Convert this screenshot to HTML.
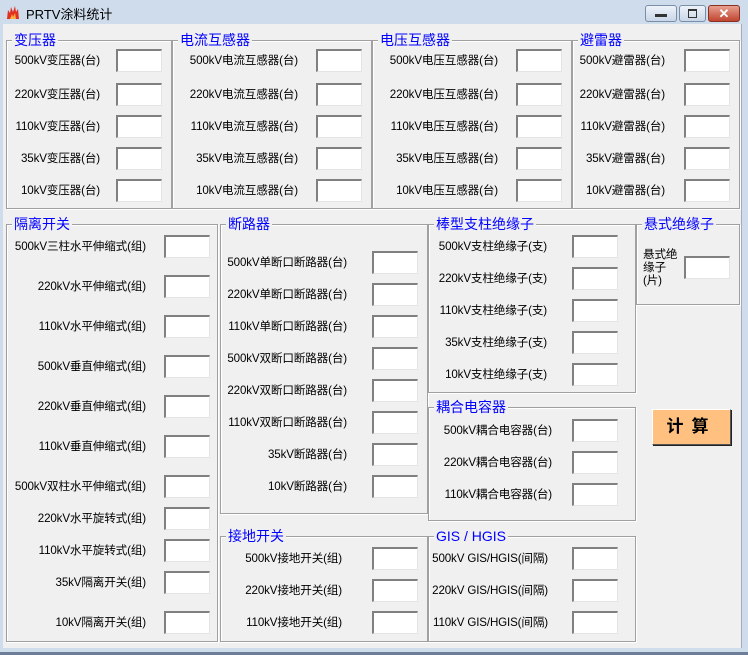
<!DOCTYPE html>
<html><head><meta charset="utf-8"><style>
body{margin:0;width:748px;height:655px;overflow:hidden;background:#6d7f96;font-family:"Liberation Sans","Noto Sans CJK SC","WenQuanYi Zen Hei",sans-serif;}
#win{position:absolute;left:0;top:0;width:748px;height:652px;background:#cfdcec;}
#client{position:absolute;left:3px;top:24px;width:738px;height:624px;background:#f0f0f0;border-right:1px solid #aab;}
.t{position:absolute;left:26px;top:4px;font-size:13px;color:#000}
.gb{position:absolute;border:1px solid #a0a0a0;box-shadow:inset 1px 1px 0 #fff,1px 1px 0 #fff;}
.lg{position:absolute;left:5px;top:-10px;background:#f0f0f0;color:#0000ff;font-size:14px;padding:0 2px;line-height:18px;white-space:nowrap}
.lb{position:absolute;font-size:11.6px;letter-spacing:-0.15px;color:#000;text-align:right;white-space:nowrap;line-height:14px}
.in{position:absolute;width:43px;height:20px;background:#fff;border-top:2px solid #808080;border-left:2px solid #808080;border-right:1px solid #e4e4e4;border-bottom:1px solid #e4e4e4;}
.btn{position:absolute;left:652px;top:409px;width:77px;height:34px;background:#ffc080;border:1px solid #fff;border-right-color:#555;border-bottom-color:#555;box-shadow:1px 1px 0 #222;font-size:17px;font-weight:bold;text-align:center;line-height:34px;letter-spacing:8px}
.wb{position:absolute;top:5px;height:15px;border:1px solid #7a8ea8;border-radius:3px;background:linear-gradient(#eef3fa,#c9d6e8);}
</style></head><body>
<div id="win">
<svg style="position:absolute;left:5px;top:4px" width="16" height="16"><path d="M2 15 L3 6 L5 9 L6 3 L8 8 L10 2 L11 8 L13 5 L14 15Z" fill="#e03020"/><path d="M5 15 L7 10 L8 13 L10 9 L11 15Z" fill="#ffb040"/></svg>
<div class="t">PRTV涂料统计</div>
<div class="wb" style="left:645px;width:30px"><div style="position:absolute;left:9px;top:8px;width:12px;height:3px;background:#333"></div></div>
<div class="wb" style="left:679px;width:25px"><div style="position:absolute;left:8px;top:3px;width:7px;height:6px;border:1px solid #333;border-top-width:2px"></div></div>
<div class="wb" style="left:708px;width:30px;background:linear-gradient(#e8a090,#c04530);border-color:#8a3020;color:#fff;font-weight:bold;font-size:13px;text-align:center;line-height:15px">✕</div>
<div id="client"></div>
</div>
<div id="root"></div>
<div class="btn">计算</div>
<script>
var h='';
function gb(x,y,w,hh,t){h+='<div class="gb" style="left:'+x+'px;top:'+y+'px;width:'+w+'px;height:'+hh+'px"><div class="lg">'+t+'</div></div>';}
function row(lx,ix,y,t){h+='<div class="lb" style="right:'+(748-lx)+'px;top:'+(y-7)+'px">'+t+'</div><div class="in" style="left:'+ix+'px;top:'+(y-12)+'px"></div>';}
gb(6,40,164,167,'变压器');gb(172,40,198,167,'电流互感器');gb(372,40,198,167,'电压互感器');gb(572,40,166,167,'避雷器');
gb(6,224,210,416,'隔离开关');gb(220,224,206,288,'断路器');gb(220,536,206,104,'接地开关');
gb(428,224,206,167,'棒型支柱绝缘子');gb(428,407,206,112,'耦合电容器');gb(428,536,206,104,'GIS / HGIS');gb(636,224,102,79,'悬式绝缘子');
var v=['500kV','220kV','110kV','35kV','10kV'],ty=[61,95,127,159,191];
for(var i=0;i<5;i++){row(100,116,ty[i],v[i]+'变压器(台)');row(298,316,ty[i],v[i]+'电流互感器(台)');row(498,516,ty[i],v[i]+'电压互感器(台)');row(665,684,ty[i],v[i]+'避雷器(台)');}
var g=['500kV三柱水平伸缩式(组)','220kV水平伸缩式(组)','110kV水平伸缩式(组)','500kV垂直伸缩式(组)','220kV垂直伸缩式(组)','110kV垂直伸缩式(组)','500kV双柱水平伸缩式(组)','220kV水平旋转式(组)','110kV水平旋转式(组)','35kV隔离开关(组)','10kV隔离开关(组)'],gy=[247,287,327,367,407,447,487,519,551,583,623];
for(i=0;i<11;i++)row(146,164,gy[i],g[i]);
var d=['500kV单断口断路器(台)','220kV单断口断路器(台)','110kV单断口断路器(台)','500kV双断口断路器(台)','220kV双断口断路器(台)','110kV双断口断路器(台)','35kV断路器(台)','10kV断路器(台)'];
for(i=0;i<8;i++)row(347,372,263+32*i,d[i]);
for(i=0;i<3;i++){row(342,372,559+32*i,v[i]+'接地开关(组)');row(548,572,559+32*i,v[i]+' GIS/HGIS(间隔)');row(552,572,431+32*i,v[i]+'耦合电容器(台)');}
for(i=0;i<5;i++)row(547,572,247+32*i,v[i]+'支柱绝缘子(支)');
h+='<div class="lb" style="left:643px;top:248px;text-align:left;line-height:13px">悬式绝<br>缘子<br>(片)</div><div class="in" style="left:684px;top:256px"></div>';
document.getElementById('root').innerHTML=h;
</script>
</body></html>
